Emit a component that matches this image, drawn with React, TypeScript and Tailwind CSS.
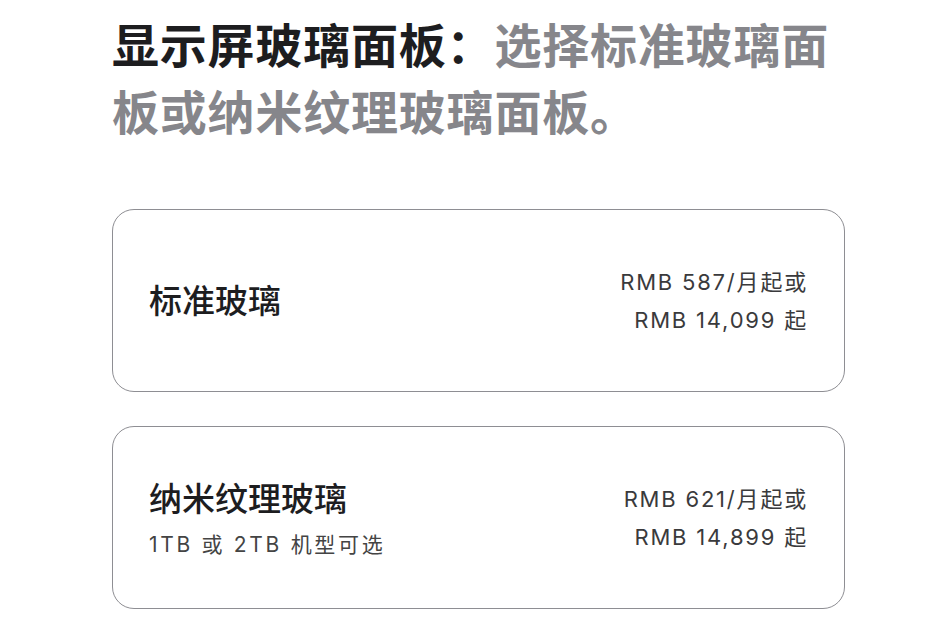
import React from "react";

const options = [
    {
        name: "标准玻璃",
        note: "",
        monthly: "RMB 587/月起或",
        total: "RMB 14,099 起",
    },
    {
        name: "纳米纹理玻璃",
        note: "1TB 或 2TB 机型可选",
        monthly: "RMB 621/月起或",
        total: "RMB 14,899 起",
    },
];

const App = () => {
    return (
        <div className="w-[940px] h-[625px] bg-white overflow-hidden font-['Inter','Noto_Sans_CJK_SC',sans-serif]">
            <div className="pl-[112px] pt-[12px]">
                {/* Heading */}
                <h1 className="w-[740px] text-[47px] leading-[67px] font-bold tracking-[0.8px]">
                    <span className="text-[#1d1d1f]">显示屏玻璃面板：</span>
                    <span className="text-[#86868b]">
                        选择标准玻璃面板或纳米纹理玻璃面板。
                    </span>
                </h1>

                {/* Option cards */}
                <div className="mt-[63px] flex flex-col gap-[34px]">
                    {options.map((opt, index) => (
                        <div
                            key={index}
                            className="w-[733px] h-[183px] rounded-[22px] border-[1.5px] border-[#8e8e93] flex items-center justify-between pl-[36px] pr-[36px]"
                        >
                            <div className="flex flex-col">
                                <div className="text-[33px] leading-[44px] font-medium text-[#1d1d1f]">
                                    {opt.name}
                                </div>
                                {opt.note && (
                                    <div className="mt-[10px] text-[21px] leading-[28px] tracking-[2.7px] text-[#444]">
                                        {opt.note}
                                    </div>
                                )}
                            </div>
                            <div className="flex flex-col items-end text-[22px] leading-[38px] tracking-[1.8px] text-[#3a3a3c]">
                                <span>{opt.monthly}</span>
                                <span>{opt.total}</span>
                            </div>
                        </div>
                    ))}
                </div>
            </div>
        </div>
    );
};

export default App;
